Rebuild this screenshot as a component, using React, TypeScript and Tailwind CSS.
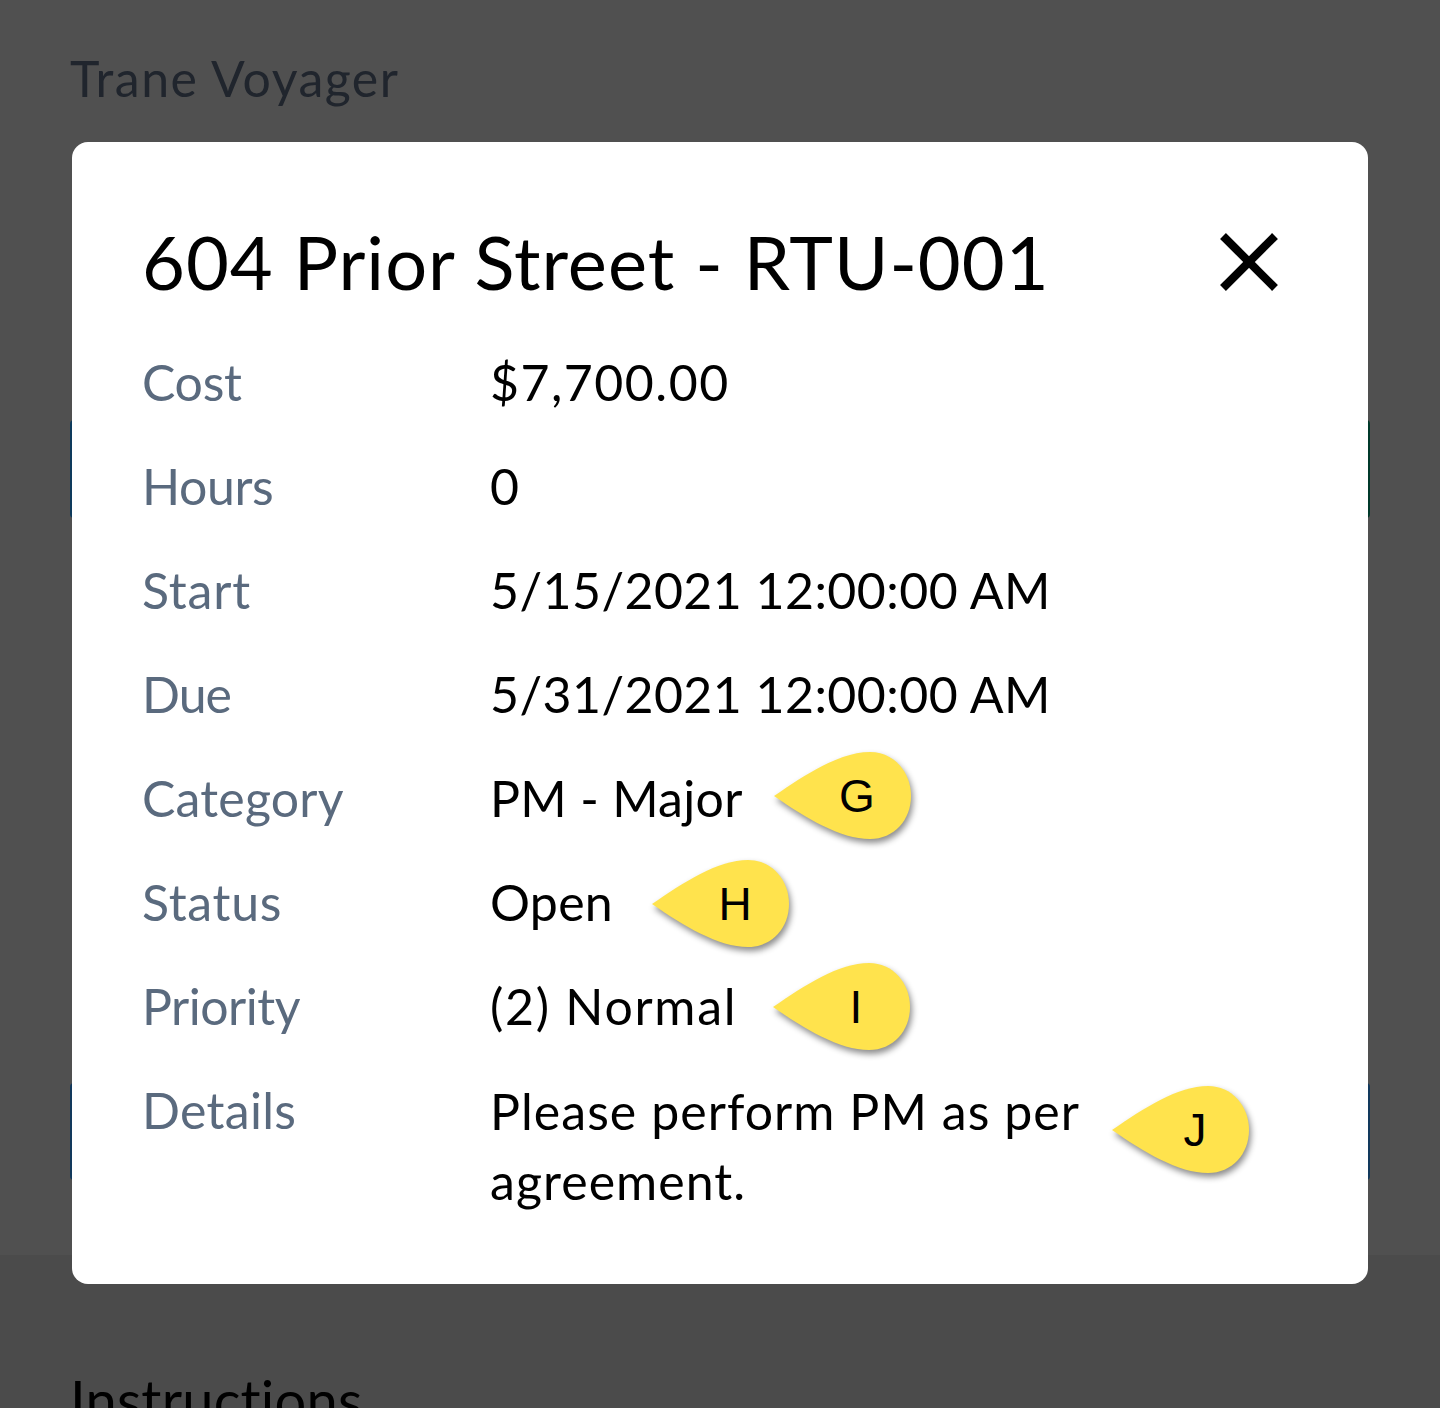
import { X } from 'lucide-react';

const font = "[font-family:Lato,'Noto_Sans',sans-serif]";

const Pin = ({ letter, left, top }: { letter: string; left: number; top: number }): JSX.Element => (
  <span className="absolute h-[100px] w-[150px]" style={{ left, top }}>
    <svg viewBox="0 0 150 100" className="absolute inset-0 h-full w-full drop-shadow-[2px_4px_3px_rgba(0,0,0,0.45)]">
      <path d="M2 48 C 34 26 68 4 98 4 C 122 4 139 24 139 48 C 139 72 122 91 98 91 C 68 91 34 70 2 48 Z" fill="#ffe34d" />
    </svg>
    <span className="absolute top-[22px] left-[67px] w-[36px] text-center font-['Liberation_Sans'] text-[46px] leading-[52px] tracking-normal text-black">{letter}</span>
  </span>
);

const rows: { label: string; labelSpacing: string; value: string; spacing: string; pin?: { letter: string; left: number; top: number } }[] = [
  { label: 'Cost', labelSpacing: 'tracking-[-0.3px]', value: '$7,700.00', spacing: 'tracking-[1.5px]' },
  { label: 'Hours', labelSpacing: 'tracking-[-0.4px]', value: '0', spacing: 'tracking-normal' },
  { label: 'Start', labelSpacing: 'tracking-[0.8px]', value: '5/15/2021 12:00:00 AM', spacing: 'tracking-[0.45px]' },
  { label: 'Due', labelSpacing: 'tracking-[-1px]', value: '5/31/2021 12:00:00 AM', spacing: 'tracking-[0.45px]' },
  { label: 'Category', labelSpacing: 'tracking-[0.2px]', value: 'PM - Major', spacing: 'tracking-[0.3px]', pin: { letter: 'G', left: 282, top: -15 } },
  { label: 'Status', labelSpacing: 'tracking-[0.7px]', value: 'Open', spacing: 'tracking-[0.3px]', pin: { letter: 'H', left: 160, top: -11 } },
  { label: 'Priority', labelSpacing: 'tracking-[-0.5px]', value: '(2) Normal', spacing: 'tracking-[1.7px]', pin: { letter: 'I', left: 281, top: -12 } },
];

export default function App(): JSX.Element {
  return (
    <div className={`relative h-[1408px] w-[1440px] overflow-hidden bg-[#505050] ${font}`}>
      <div className="flex h-[1255px] flex-col px-[70px] pt-[45px]">
        <h2 className="text-[50px] leading-[66px] tracking-[1.5px] text-[#20252d]">Trane Voyager</h2>
        <p className="mt-[113px] text-[50px] leading-[66px] text-[#20252d]">Unit</p>
        <div className="mt-[130px] h-[98px] rounded-[4px] bg-gradient-to-r from-[#0e3a5c] to-[#00392a]" />
        <div className="mt-[565px] h-[97px] rounded-[4px] bg-[#12395c]" />
      </div>
      <div className="h-[153px] bg-[#4b4b4b] px-[70px] pt-[110px]">
        <h2 className="text-[56px] leading-[70px] tracking-[0.2px] text-black">Instructions</h2>
      </div>

      <div className="absolute top-[142px] left-[72px] h-[1142px] w-[1296px] rounded-[16px] bg-white pt-[77px] pr-[88px] pl-[70px]">
        <div className="flex items-start justify-between">
          <h1 className="text-[74px] leading-[86px] tracking-[1px] text-black">604 Prior Street - RTU-001</h1>
          <span className="mt-[5px] -mr-[7px] flex h-[76px] w-[76px] items-center justify-center">
            <X size={104} strokeWidth={1.9} strokeLinecap="butt" className="-m-[14px] shrink-0 text-black" />
          </span>
        </div>
        <div className="mt-[42px] flex flex-col gap-[34px] text-[50px] leading-[70px]">
          {rows.map((row) => (
            <div key={row.label} className="grid grid-cols-[348px_1fr]">
              <span className={`text-[#5a6a7e] ${row.labelSpacing}`}>{row.label}</span>
              <span className={`relative text-black ${row.spacing}`}>
                {row.value}
                {row.pin && <Pin {...row.pin} />}
              </span>
            </div>
          ))}
          <div className="grid grid-cols-[348px_1fr]">
            <span className="tracking-[0.3px] text-[#5a6a7e]">Details</span>
            <span className="relative pt-[1px] tracking-[1.05px] text-black">
              Please perform PM as per
              <br />
              agreement.
              <Pin letter="J" left={620} top={7} />
            </span>
          </div>
        </div>
      </div>
    </div>
  );
}
